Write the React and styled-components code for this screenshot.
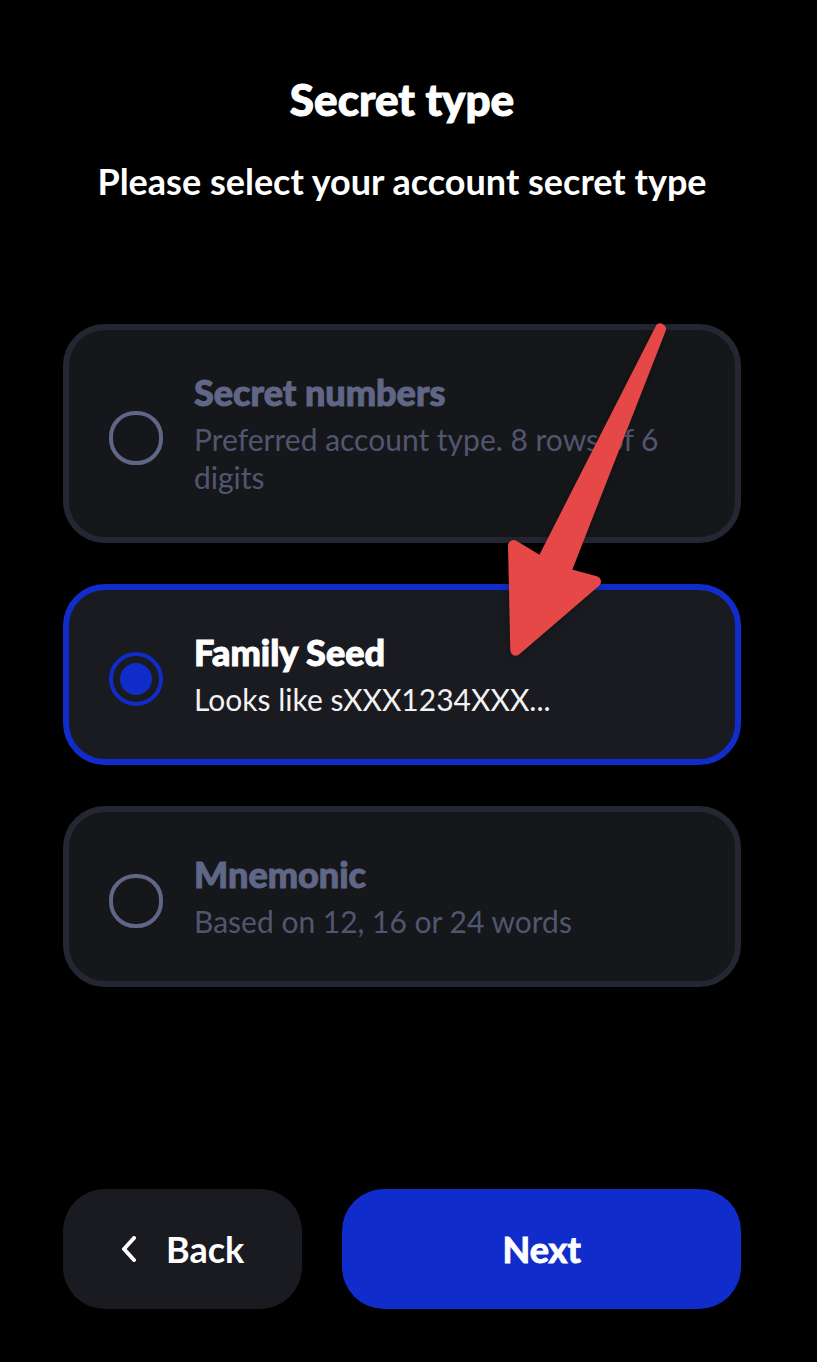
import React, { useState } from "react";
import styled, { createGlobalStyle } from "styled-components";

const GlobalStyle = createGlobalStyle`
  *, *::before, *::after { box-sizing: border-box; }
  body {
    margin: 0;
    background: #000;
    color: #fff;
    font-family: Lato, "Liberation Sans", sans-serif;
  }
  button, input { font: inherit; }
`;

const Page = styled.main`
  display: flex;
  flex-direction: column;
  min-height: 100vh;
  padding: 75px 76px 53px 63px;
`;

const Header = styled.header`
  display: flex;
  flex-direction: column;
  gap: 38px;
  text-align: center;
`;

const Title = styled.h1`
  margin: 0;
  font-size: 44px;
  line-height: 48px;
  font-weight: 900;
  -webkit-text-stroke: 1px currentColor;
`;

const Subtitle = styled.p`
  margin: 0;
  font-size: 36px;
  line-height: 40px;
  font-weight: 700;
`;

const Options = styled.div`
  position: relative;
  display: flex;
  flex-direction: column;
  gap: 41px;
  margin: 123px 0 80px;
`;

const Option = styled.label`
  display: flex;
  align-items: center;
  gap: 31px;
  padding: 42px 40px 41px;
  border: 6px solid ${(p) => (p.$selected ? "#102dcb" : "#242732")};
  border-radius: 42px;
  background: ${(p) => (p.$selected ? "#1a1b20" : "#16171b")};
  color: ${(p) => (p.$selected ? "#fff" : "#606686")};
  cursor: pointer;
`;

const Radio = styled.input`
  appearance: none;
  display: grid;
  place-items: center;
  flex: none;
  width: 54px;
  height: 54px;
  margin: 8px 0 0;
  border: 4px solid #606686;
  border-radius: 26px;

  &:checked {
    border-color: #102dcb;
    border-radius: 50%;
  }

  &:checked::before {
    content: "";
    width: 32px;
    height: 32px;
    border-radius: 50%;
    background: #102dcb;
  }
`;

const OptionText = styled.span`
  display: flex;
  flex-direction: column;
  gap: 8px;
  min-width: 0;
`;

const OptionName = styled.span`
  font-size: 36px;
  line-height: 40px;
  font-weight: 900;
  -webkit-text-stroke: 1px currentColor;
`;

const OptionHint = styled.span`
  font-size: 30px;
  line-height: 38px;
  color: ${(p) => (p.$selected ? "#f2f2f2" : "#51566f")};
`;

const Arrow = styled.svg`
  position: absolute;
  top: -4px;
  right: 71px;
  width: 166px;
  height: 340px;
  pointer-events: none;
  filter: drop-shadow(0 0 5px rgba(0, 0, 0, 0.3));
`;

const Actions = styled.footer`
  display: grid;
  grid-template-columns: 3fr 5fr;
  gap: 40px;
  margin-top: auto;
`;

const Button = styled.button`
  display: flex;
  align-items: center;
  justify-content: center;
  gap: 30px;
  height: 120px;
  padding: 0;
  border: 0;
  border-radius: 42px;
  background: ${(p) => (p.$primary ? "#102dcb" : "#1a1b20")};
  color: #fff;
  font-size: 36px;
  line-height: 40px;
  font-weight: 700;
  -webkit-text-stroke: ${(p) => (p.$primary ? "1px currentColor" : "0")};
  cursor: pointer;
`;

const OPTIONS = [
  { id: "numbers", name: "Secret numbers", hint: "Preferred account type. 8 rows of 6 digits" },
  { id: "seed", name: "Family Seed", hint: "Looks like sXXX1234XXX..." },
  { id: "mnemonic", name: "Mnemonic", hint: "Based on 12, 16 or 24 words" },
];

export default function App() {
  const [selected, setSelected] = useState("seed");
  return (
    <>
      <GlobalStyle />
      <Page>
        <Header>
          <Title>Secret type</Title>
          <Subtitle>Please select your account secret type</Subtitle>
        </Header>
        <Options role="radiogroup" aria-label="Secret type">
          {OPTIONS.map((o) => (
            <Option key={o.id} $selected={selected === o.id}>
              <Radio
                type="radio"
                name="secret-type"
                value={o.id}
                checked={selected === o.id}
                onChange={() => setSelected(o.id)}
              />
              <OptionText>
                <OptionName>{o.name}</OptionName>
                <OptionHint $selected={selected === o.id}>{o.hint}</OptionHint>
              </OptionText>
            </Option>
          ))}
          <Arrow viewBox="504 320 166 340" aria-hidden="true">
            <path
              d="M660.5 329 L541.7 562.4 L513.5 545.5 L515.8 650.2 L595.5 581.5 L565 573.3 Z"
              fill="#e64848"
              stroke="#e64848"
              strokeWidth="11"
              strokeLinejoin="round"
            />
          </Arrow>
        </Options>
        <Actions>
          <Button type="button">
            <svg width="15" height="26" viewBox="0 0 15 26" fill="none" aria-hidden="true">
              <path d="M13 2 L3 13 L13 24" stroke="#fff" strokeWidth="4" strokeLinecap="round" strokeLinejoin="round" />
            </svg>
            Back
          </Button>
          <Button type="button" $primary>Next</Button>
        </Actions>
      </Page>
    </>
  );
}
